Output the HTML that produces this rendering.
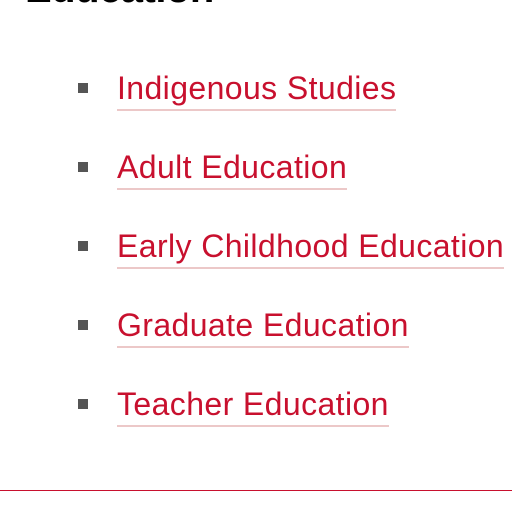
<!DOCTYPE html>
<html><head><style>
html,body{margin:0;padding:0;background:#fff;width:512px;height:512px;overflow:hidden;position:relative;font-family:"Liberation Sans",sans-serif}
h2{position:absolute;left:25px;top:-31px;margin:0;font-size:40px;line-height:40px;font-weight:bold;color:#000;letter-spacing:-0.5px}
.b{position:absolute;left:78px;width:10px;height:10px;background:#555}
.t{position:absolute;left:117px;white-space:nowrap;font-size:32px;line-height:32px;color:#c8102e;letter-spacing:0.4px;border-bottom:2px solid #ecc8c8;padding-bottom:5px}
.line{position:absolute;left:0;top:490px;width:512px;height:1px;background:#c8102e}
</style></head><body>
<h2>Education</h2>
<div class="b" style="top:83px"></div><div class="t" style="top:72px">Indigenous Studies</div>
<div class="b" style="top:162px"></div><div class="t" style="top:151px">Adult Education</div>
<div class="b" style="top:241px"></div><div class="t" style="top:230px">Early Childhood Education</div>
<div class="b" style="top:320px"></div><div class="t" style="top:309px">Graduate Education</div>
<div class="b" style="top:399px"></div><div class="t" style="top:388px">Teacher Education</div>
<div class="line"></div>
</body></html>
